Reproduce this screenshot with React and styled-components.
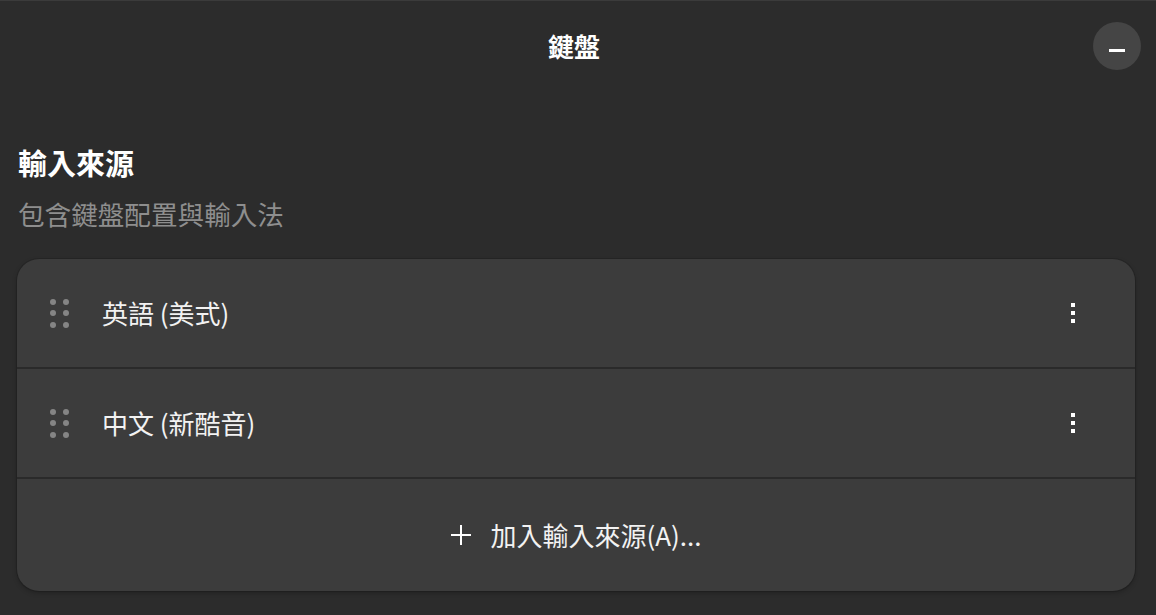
import React from "react";
import styled, { createGlobalStyle } from "styled-components";

const Global = createGlobalStyle`
  html, body { margin: 0; padding: 0; background: #2c2c2c; }
  body { font-family: "Noto Sans CJK TC", "Noto Sans", sans-serif; color: #ffffff; }
  * { box-sizing: border-box; }
`;

const Window = styled.div`
  width: 1156px;
  height: 615px;
  background: #2c2c2c;
  border-top: 1px solid #3b3b3b;
  display: flex;
  flex-direction: column;
  overflow: hidden;
`;

const HeaderBar = styled.header`
  height: 91px;
  display: grid;
  grid-template-columns: 1fr auto 1fr;
  align-items: center;
  padding: 0 15px;
`;

const Title = styled.h1`
  grid-column: 2;
  margin: 0;
  font-family: "Noto Sans CJK TC", sans-serif;
  font-weight: 700;
  font-size: 26px;
  line-height: 1;
  color: #ffffff;
  transform: translate(-4px, -1px);
`;

const CircleButton = styled.button`
  grid-column: 3;
  justify-self: end;
  width: 48px;
  height: 48px;
  border-radius: 50%;
  border: none;
  background: #454545;
  display: flex;
  align-items: center;
  justify-content: center;
  padding: 0;
  transform: translateY(-1px);
`;

const Dash = styled.span`
  display: block;
  width: 16px;
  height: 3px;
  background: #ffffff;
  margin-top: 9px;
`;

const Content = styled.main`
  padding: 0 21px 0 17px;
  display: flex;
  flex-direction: column;
`;

const Heading = styled.h2`
  margin: 0;
  padding-left: 1px;
  margin-top: 52px;
  font-family: "Noto Sans CJK TC", sans-serif;
  font-weight: 700;
  font-size: 29px;
  line-height: 36px;
  color: #ffffff;
`;

const Subtitle = styled.p`
  margin: 19px 0 0;
  padding-left: 1px;
  font-family: "Noto Sans CJK TC", sans-serif;
  font-size: 26.6px;
  line-height: 30px;
  color: #8e8e8e;
`;

const Card = styled.section`
  margin-top: 30px;
  width: 1118px;
  background: #3c3c3c;
  border-radius: 22px;
  overflow: hidden;
  box-shadow: 0 0 0 1px rgba(0, 0, 0, 0.12), 0 2px 5px rgba(0, 0, 0, 0.25);
`;

const Row = styled.div`
  height: ${(p) => p.$h}px;
  display: flex;
  align-items: center;
  border-top: ${(p) => (p.$first ? "none" : "2px solid #2a2a2a")};
  padding: 0 0 0 32px;
  justify-content: ${(p) => (p.$center ? "center" : "flex-start")};
`;

const Handle = styled.div`
  display: grid;
  grid-template-columns: repeat(2, 6px);
  grid-auto-rows: 6px;
  column-gap: 7px;
  row-gap: 5.5px;
  margin-left: 1px;
  margin-top: 0;
`;

const Dot = styled.span`
  width: 6px;
  height: 6px;
  border-radius: 50%;
  background: #858585;
`;

const Label = styled.span`
  font-family: "Noto Sans CJK TC", "Noto Sans", sans-serif;
  font-size: 26px;
  line-height: 1;
  color: #f2f2f2;
  margin-left: 33px;
  flex: 1;
`;

const Kebab = styled.div`
  width: 4px;
  display: flex;
  flex-direction: column;
  gap: 4px;
  margin-right: 60px;
`;

const KDot = styled.span`
  width: 4px;
  height: 4px;
  background: #ffffff;
`;

const AddLabel = styled.span`
  display: flex;
  align-items: center;
  gap: 18px;
  font-family: "Noto Sans CJK TC", "Noto Sans", sans-serif;
  font-size: 26px;
  line-height: 1;
  color: #f2f2f2;
  margin-left: -32px;
`;

const DragHandle = () => (
  <Handle>
    {Array.from({ length: 6 }).map((_, i) => (
      <Dot key={i} />
    ))}
  </Handle>
);

const Menu = () => (
  <Kebab>
    <KDot />
    <KDot />
    <KDot />
  </Kebab>
);

export default function App() {
  return (
    <>
      <Global />
      <Window>
        <HeaderBar>
          <Title>鍵盤</Title>
          <CircleButton aria-label="minimize">
            <Dash />
          </CircleButton>
        </HeaderBar>
        <Content>
          <Heading>輸入來源</Heading>
          <Subtitle>包含鍵盤配置與輸入法</Subtitle>
          <Card>
            <Row $first $h={108}>
              <DragHandle />
              <Label>英語 (美式)</Label>
              <Menu />
            </Row>
            <Row $h={110}>
              <DragHandle />
              <Label>中文 (新酷音)</Label>
              <Menu />
            </Row>
            <Row $h={114} $center>
              <AddLabel>
                <svg width="22" height="22" viewBox="0 0 22 22">
                  <path d="M11 1v20M1 11h20" stroke="#ffffff" strokeWidth="2" fill="none" />
                </svg>
                加入輸入來源(A)...
              </AddLabel>
            </Row>
          </Card>
        </Content>
      </Window>
    </>
  );
}
